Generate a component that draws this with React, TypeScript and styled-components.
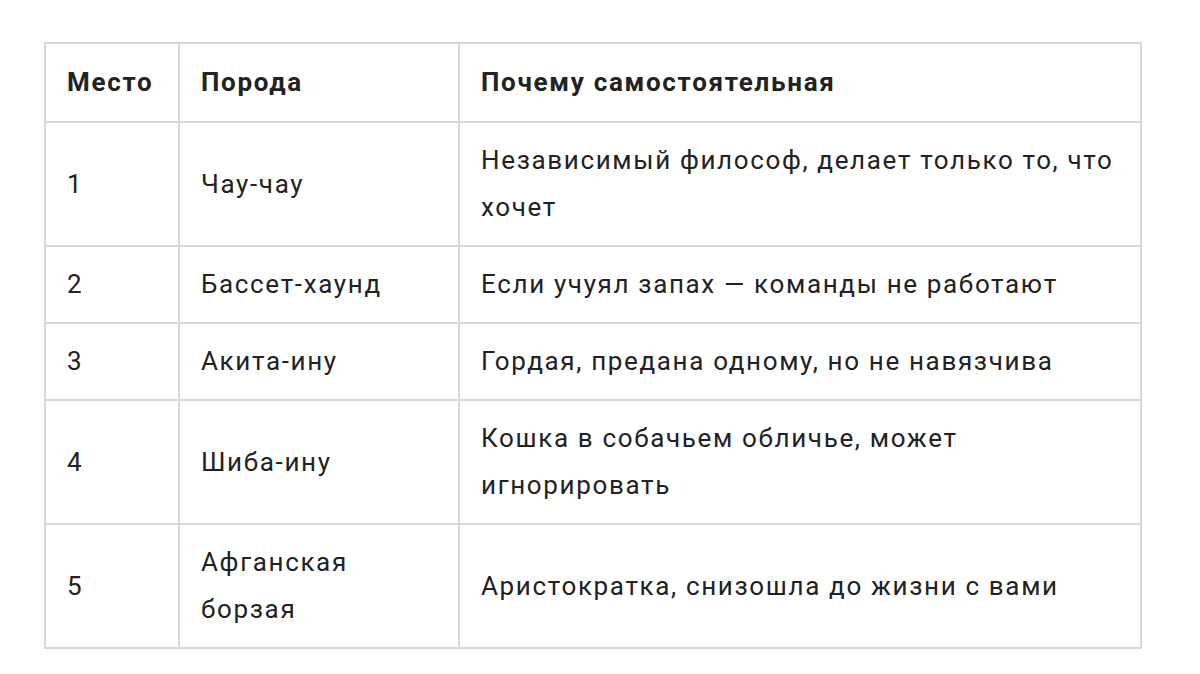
import React from 'react';
import styled, { createGlobalStyle } from 'styled-components';

const GlobalStyle = createGlobalStyle`
  html, body {
    margin: 0;
    padding: 0;
    background: #ffffff;
  }
  body {
    font-family: Roboto, 'Noto Sans', sans-serif;
  }
`;

const Page = styled.div`
  width: 1200px;
  height: 674px;
  padding: 42px 0 0 44px;
  box-sizing: border-box;
`;

const Table = styled.table`
  width: 1096px;
  border-collapse: collapse;
  table-layout: fixed;
  font-family: Roboto, 'Noto Sans', sans-serif;
  font-size: 26px;
  letter-spacing: 1.65px;
  line-height: 47px;
  color: #222222;
`;

const HeadCell = styled.th<{ $width: number }>`
  box-sizing: border-box;
  width: ${(p) => p.$width}px;
  text-align: left;
  font-weight: 700;
  letter-spacing: 1.7px;
  padding: 15px 10px 15px 21px;
  border: 2px solid #dcd6d4;
  vertical-align: middle;
`;

const Cell = styled.td`
  box-sizing: border-box;
  padding: 14px 10px 14px 21px;
  border: 2px solid #dcd6d4;
  vertical-align: middle;
  font-weight: 400;
`;

const rows = [
  { place: '1', breed: 'Чау-чау', why: 'Независимый философ, делает только то, что хочет' },
  { place: '2', breed: 'Бассет-хаунд', why: 'Если учуял запах — команды не работают' },
  { place: '3', breed: 'Акита-ину', why: 'Гордая, предана одному, но не навязчива' },
  { place: '4', breed: 'Шиба-ину', why: 'Кошка в собачьем обличье, может игнорировать' },
  { place: '5', breed: 'Афганская борзая', why: 'Аристократка, снизошла до жизни с вами' },
];

const App: React.FC = () => {
  return (
    <Page>
      <GlobalStyle />
      <Table>
        <thead>
          <tr>
            <HeadCell $width={134}>Место</HeadCell>
            <HeadCell $width={280}>Порода</HeadCell>
            <HeadCell $width={682}>Почему самостоятельная</HeadCell>
          </tr>
        </thead>
        <tbody>
          {rows.map((r) => (
            <tr key={r.place}>
              <Cell>{r.place}</Cell>
              <Cell>{r.breed}</Cell>
              <Cell>{r.why}</Cell>
            </tr>
          ))}
        </tbody>
      </Table>
    </Page>
  );
};

export default App;
